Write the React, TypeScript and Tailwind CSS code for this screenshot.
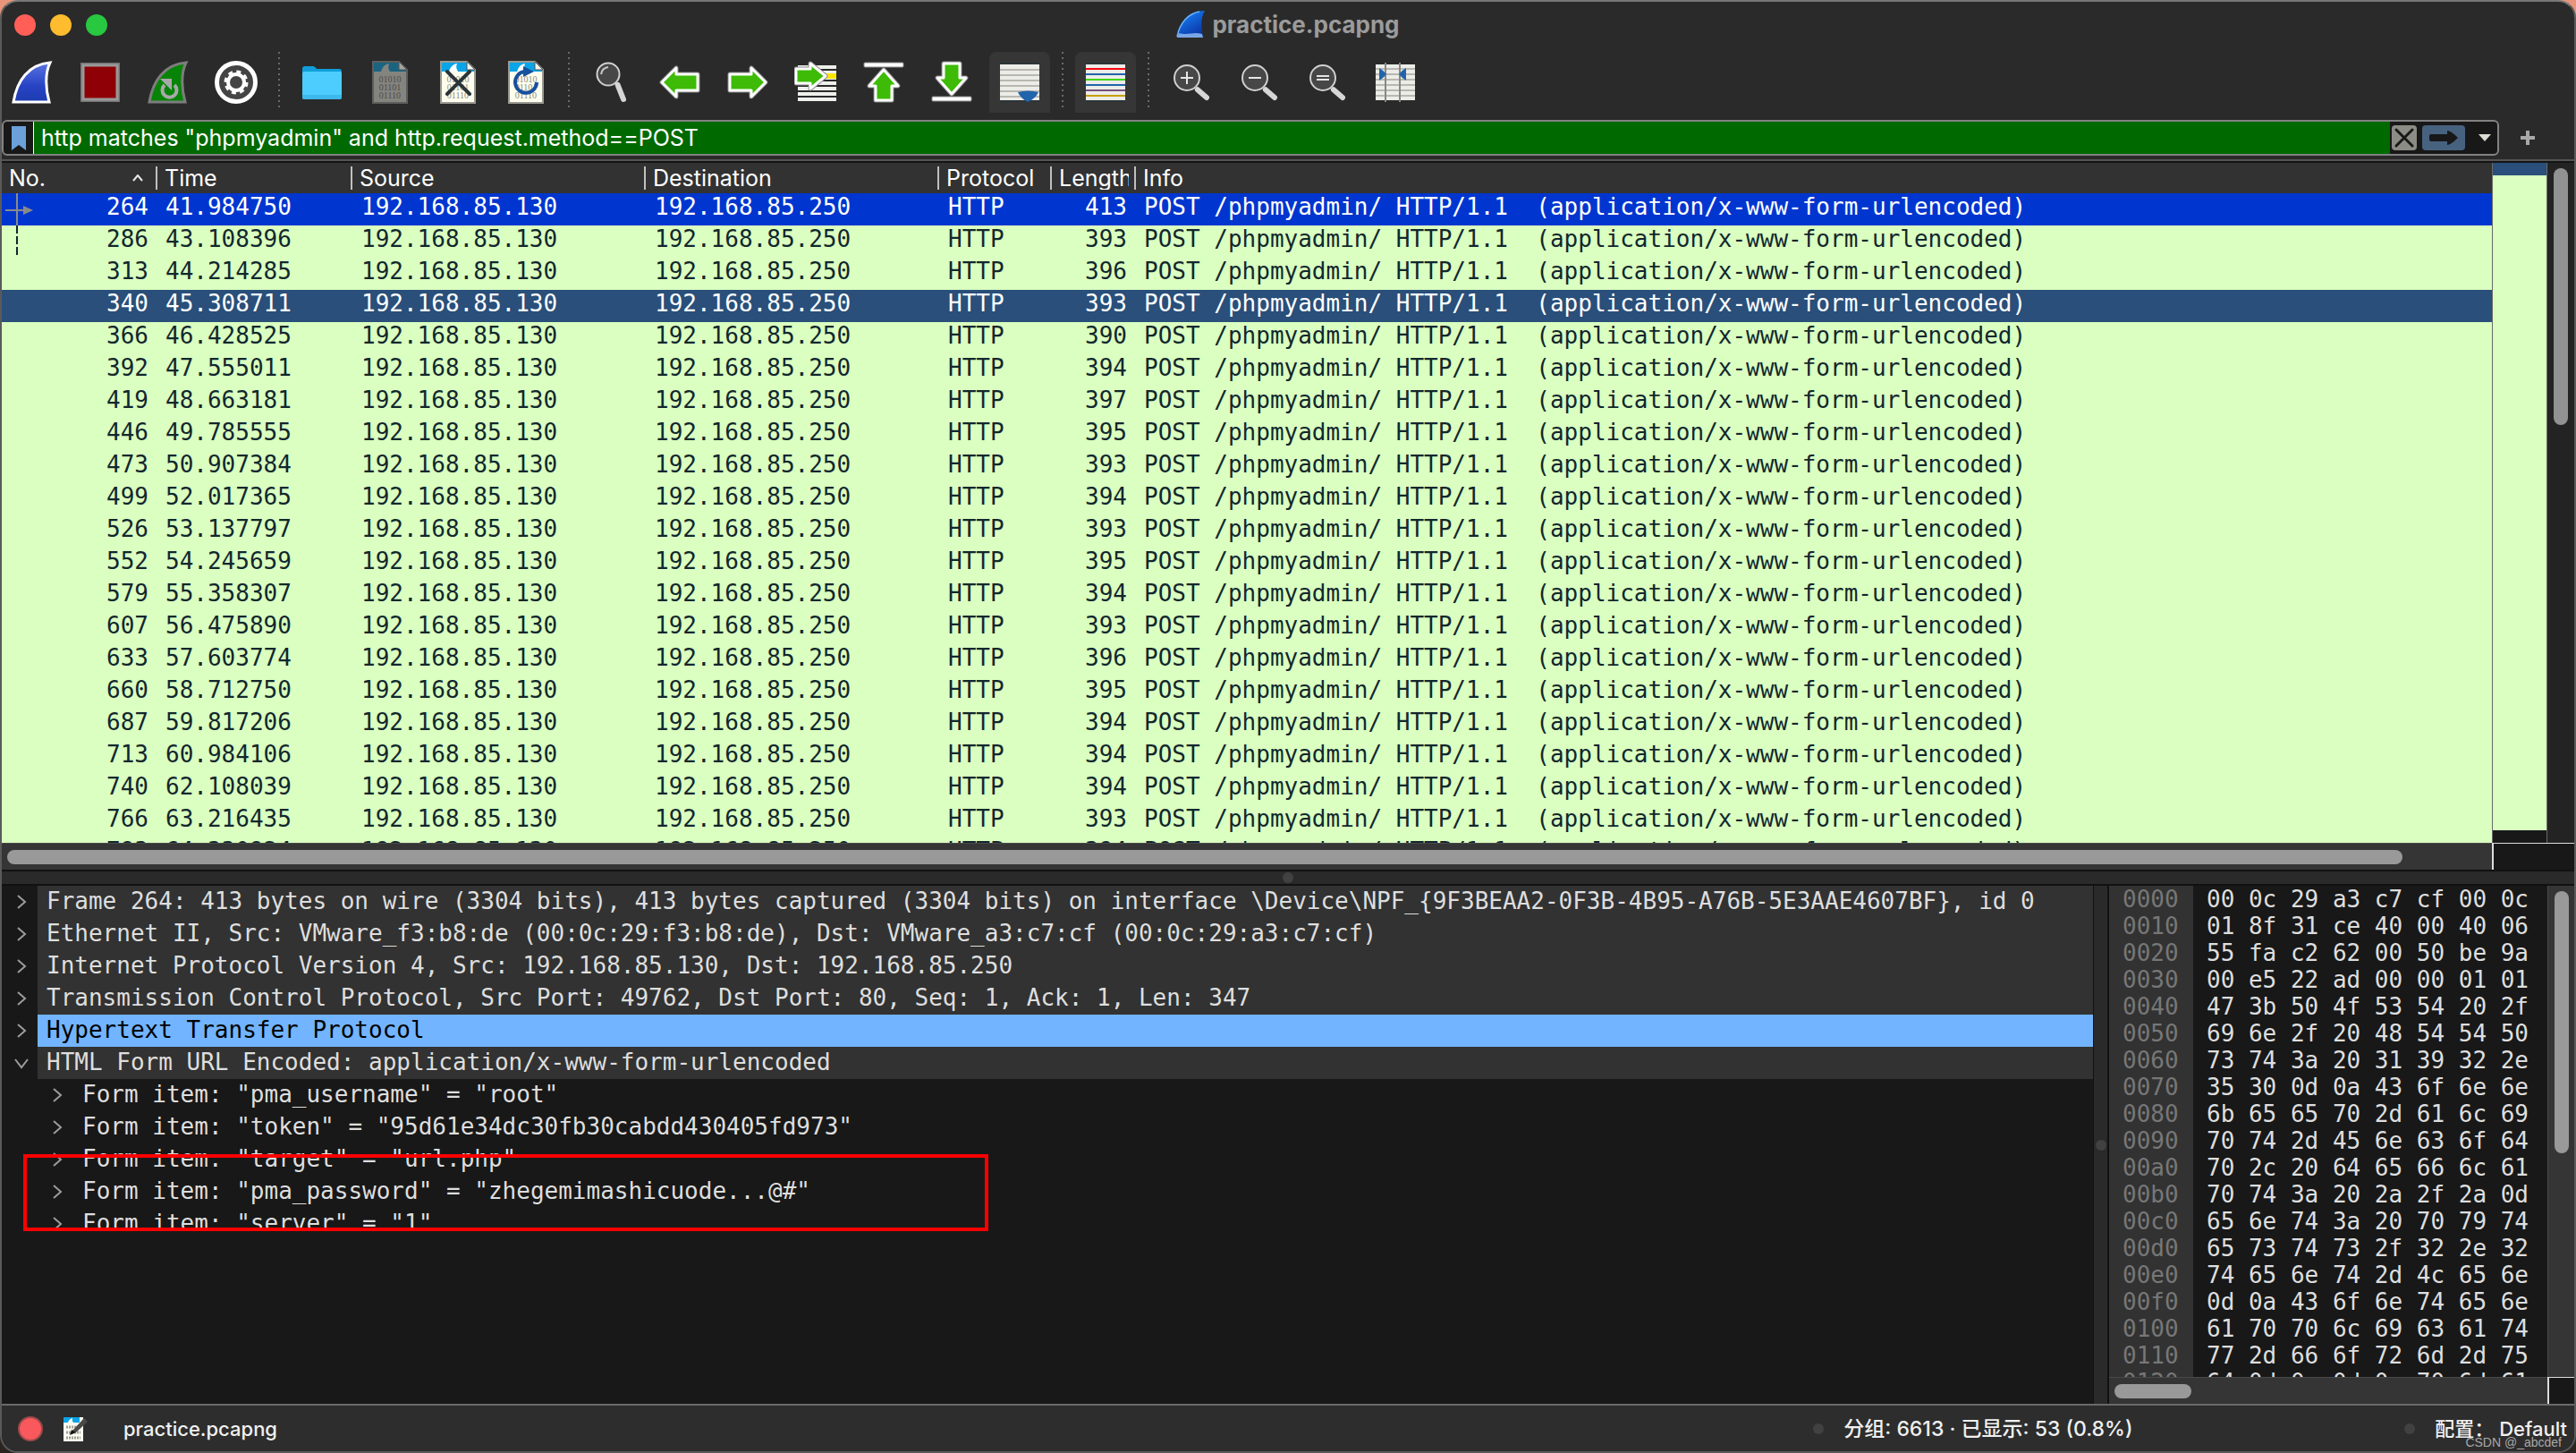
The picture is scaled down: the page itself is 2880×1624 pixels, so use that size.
import type { ReactNode } from "react"
import clsx from "clsx"

type Packet = { no: number, time: string, len: number }

const packets: Packet[] = [
    { no: 264, time: "41.984750", len: 413 },
    { no: 286, time: "43.108396", len: 393 },
    { no: 313, time: "44.214285", len: 396 },
    { no: 340, time: "45.308711", len: 393 },
    { no: 366, time: "46.428525", len: 390 },
    { no: 392, time: "47.555011", len: 394 },
    { no: 419, time: "48.663181", len: 397 },
    { no: 446, time: "49.785555", len: 395 },
    { no: 473, time: "50.907384", len: 393 },
    { no: 499, time: "52.017365", len: 394 },
    { no: 526, time: "53.137797", len: 393 },
    { no: 552, time: "54.245659", len: 395 },
    { no: 579, time: "55.358307", len: 394 },
    { no: 607, time: "56.475890", len: 393 },
    { no: 633, time: "57.603774", len: 396 },
    { no: 660, time: "58.712750", len: 395 },
    { no: 687, time: "59.817206", len: 394 },
    { no: 713, time: "60.984106", len: 394 },
    { no: 740, time: "62.108039", len: 394 },
    { no: 766, time: "63.216435", len: 393 },
    { no: 793, time: "64.330924", len: 394 },
]

const protocols = [
    "Frame 264: 413 bytes on wire (3304 bits), 413 bytes captured (3304 bits) on interface \\Device\\NPF_{9F3BEAA2-0F3B-4B95-A76B-5E3AAE4607BF}, id 0",
    "Ethernet II, Src: VMware_f3:b8:de (00:0c:29:f3:b8:de), Dst: VMware_a3:c7:cf (00:0c:29:a3:c7:cf)",
    "Internet Protocol Version 4, Src: 192.168.85.130, Dst: 192.168.85.250",
    "Transmission Control Protocol, Src Port: 49762, Dst Port: 80, Seq: 1, Ack: 1, Len: 347",
    "Hypertext Transfer Protocol",
    "HTML Form URL Encoded: application/x-www-form-urlencoded",
]

const formItems = [
    "Form item: \"pma_username\" = \"root\"",
    "Form item: \"token\" = \"95d61e34dc30fb30cabdd430405fd973\"",
    "Form item: \"target\" = \"url.php\"",
    "Form item: \"pma_password\" = \"zhegemimashicuode...@#\"",
    "Form item: \"server\" = \"1\"",
]

const bytes = [
    "00 0c 29 a3 c7 cf 00 0c",
    "01 8f 31 ce 40 00 40 06",
    "55 fa c2 62 00 50 be 9a",
    "00 e5 22 ad 00 00 01 01",
    "47 3b 50 4f 53 54 20 2f",
    "69 6e 2f 20 48 54 54 50",
    "73 74 3a 20 31 39 32 2e",
    "35 30 0d 0a 43 6f 6e 6e",
    "6b 65 65 70 2d 61 6c 69",
    "70 74 2d 45 6e 63 6f 64",
    "70 2c 20 64 65 66 6c 61",
    "70 74 3a 20 2a 2f 2a 0d",
    "65 6e 74 3a 20 70 79 74",
    "65 73 74 73 2f 32 2e 32",
    "74 65 6e 74 2d 4c 65 6e",
    "0d 0a 43 6f 6e 74 65 6e",
    "61 70 70 6c 69 63 61 74",
    "77 2d 66 6f 72 6d 2d 75",
    "64 0d 0a 0d 0a 70 6d 61",
]

export default function App() {
    return (
        <div className="h-screen w-full bg-linear-to-b from-[#e8957c] to-[#2a2420]">
            <div className="flex h-full flex-col overflow-hidden rounded-[20px] border-2 border-[#5a5a5a] border-t-[#777777] bg-[#2a2a2a] font-[Inter,'Noto_Sans_CJK_SC',sans-serif] text-[25px] text-white">
                <TitleBar />
                <Toolbar />
                <FilterBar />
                <PacketList />
                <div className="flex h-[18px] items-center justify-center border-y-2 border-[#111111]">
                    <Grip />
                </div>
                <div className="flex min-h-0 flex-[579]">
                    <PacketDetails />
                    <div className="flex w-[15px] items-center justify-center">
                        <Grip />
                    </div>
                    <PacketBytes />
                </div>
                <StatusBar />
            </div>
        </div>
    )
}

function Grip() {
    return <span className="size-3 shrink-0 rounded-full bg-[#414141]"></span>
}

function TitleBar() {
    return (
        <header className="relative flex h-[54px] items-center justify-center gap-2 pb-1">
            <div className="absolute top-[14px] left-[14px] flex gap-4">
                <button aria-label="Close" className="size-6 rounded-full bg-[#ff5f57]"></button>
                <button aria-label="Minimize" className="size-6 rounded-full bg-[#febc2e]"></button>
                <button aria-label="Zoom" className="size-6 rounded-full bg-[#28c840]"></button>
            </div>
            <svg viewBox="0 0 32 32" className="size-8">
                <defs>
                    <linearGradient id="logo" x1="0" y1="0" x2="0.6" y2="1">
                        <stop offset="0" stopColor="#1a8cff" />
                        <stop offset="1" stopColor="#0a35a8" />
                    </linearGradient>
                </defs>
                <path d="M1 31C3 14 14 1 32 1C27 9 28 19 30 31Z" fill="url(#logo)" />
                <path d="M1 30C4 14 14 4 26 2" fill="none" stroke="#6cb4ff" strokeWidth="1.5" />
                <path d="M1 31C2 28 2 28 3 26C12 29 20 24 29 27L30 31Z" fill="#7ba6e6" />
            </svg>
            <h1 className="text-[26px] font-bold text-[#9b9b9b]">practice.pcapng</h1>
        </header>
    )
}

/* toolbar */

function ToolButton({ label, active, children }: { label: string, active?: boolean, children: ReactNode }) {
    return (
        <button aria-label={label} className={clsx("flex size-[68px] items-center justify-center", active && "rounded-t-lg bg-[#363636]")}>
            <svg viewBox="0 0 48 48" className="size-12">
                {children}
            </svg>
        </button>
    )
}

function Separator() {
    return (
        <div className="flex w-3 justify-center">
            <svg viewBox="0 0 2 62" className="h-[62px] w-[2px]">
                <path d="M1 0V62" stroke="#6a6a6a" strokeWidth="2" strokeDasharray="2 4" />
            </svg>
        </div>
    )
}

function Toolbar() {
    return (
        <nav className="flex h-[78px] items-start gap-2 pt-[2px]">
            <ToolButton label="Start capture">
                <path d="M3 46C7 22 20 4 44 2C38 14 39 32 43 46Z" fill="url(#blueFin)" stroke="#ffffff" strokeWidth="3" />
                <defs>
                    <linearGradient id="blueFin" x1="0" y1="0" x2="0" y2="1">
                        <stop offset="0" stopColor="#5a74e0" />
                        <stop offset="0.6" stopColor="#2743c4" />
                        <stop offset="1" stopColor="#1e3cb0" />
                    </linearGradient>
                </defs>
            </ToolButton>
            <ToolButton label="Stop capture">
                <rect x="4" y="4" width="40" height="40" fill="#8f0006" stroke="#757575" strokeWidth="4" />
                <rect x="5" y="5" width="38" height="38" fill="none" stroke="#999999" strokeWidth="3" />
            </ToolButton>
            <ToolButton label="Restart capture">
                <path d="M3 46C7 22 20 4 44 2C38 14 39 32 43 46Z" fill="#078407" stroke="#7d7d7d" strokeWidth="3" />
                <path d="M20 27A8 8 0 1 0 31 27" fill="none" stroke="#a8a8a8" strokeWidth="4" />
                <path d="M15 20L28 20L28 33Z" fill="#a8a8a8" />
            </ToolButton>
            <ToolButton label="Capture options">
                <circle cx="24" cy="24" r="21.5" fill="#444444" stroke="#ffffff" strokeWidth="5" />
                <circle cx="24" cy="24" r="11.5" fill="none" stroke="#ffffff" strokeWidth="4" strokeDasharray="4.8 4.232" />
                <circle cx="24" cy="24" r="9" fill="none" stroke="#ffffff" strokeWidth="4" />
            </ToolButton>
            <Separator />
            <ToolButton label="Open">
                <path d="M2 9Q2 6 5 6H14Q16 6 18 9H43Q46 9 46 12V20H2Z" fill="#109fdb" />
                <rect x="2" y="12" width="44" height="31" rx="2" fill="#4dcdfd" />
                <path d="M2 38H46V40Q46 43 43 43H5Q2 43 2 40Z" fill="#3db8ec" />
            </ToolButton>
            <ToolButton label="Save">
                <CaptureFile dim />
            </ToolButton>
            <ToolButton label="Close file">
                <CaptureFile />
                <path d="M12 12L37 37M37 12L12 37" stroke="#2b3538" strokeWidth="4" strokeLinecap="round" />
            </ToolButton>
            <ToolButton label="Reload">
                <CaptureFile />
                <path d="M36 24A12 12 0 1 1 22 12" fill="none" stroke="#17509c" strokeWidth="4" />
                <path d="M21 6L33 12L21 18Z" fill="#17509c" />
            </ToolButton>
            <Separator />
            <ToolButton label="Find">
                <Lens cx={20} cy={15} r={12.5} hx={37} hy={43} />
                <path d="M12 15Q13 8 20 7" fill="none" stroke="#c8c8c8" strokeWidth="2" />
            </ToolButton>
            <ToolButton label="Back">
                <Arrow d="M4 24L20 8V15H44V33H20V40Z" />
            </ToolButton>
            <ToolButton label="Forward">
                <Arrow d="M44 24L28 8V15H4V33H28V40Z" />
            </ToolButton>
            <ToolButton label="Go to packet">
                <path d="M4 7H47M4 13H47M4 19H47M4 25H47M4 31H47M4 37H47M4 43H47" stroke="#efefec" strokeWidth="4" />
                <rect x="34" y="14" width="13" height="6" fill="#ffe600" />
                <Arrow d="M2 9H18V3L35 17L18 31V25H2Z" />
            </ToolButton>
            <ToolButton label="First packet">
                <rect x="2" y="2" width="44" height="5" rx="1" fill="#ffffff" stroke="#8a8a8a" />
                <Arrow d="M24 10L40 28H33V44H15V28H8Z" />
            </ToolButton>
            <ToolButton label="Last packet">
                <rect x="2" y="40" width="44" height="5" rx="1" fill="#ffffff" stroke="#8a8a8a" />
                <Arrow d="M24 37L40 19H33V3H15V19H8Z" />
            </ToolButton>
            <ToolButton label="Auto scroll" active>
                <rect x="2" y="3" width="44" height="42" fill="#ecece9" />
                <path d="M2 10H46M2 16H46M2 22H46M2 28H46M2 34H46M2 40H46" stroke="#b8b8b0" strokeWidth="2" />
                <path d="M2 3H46M2 45H46" stroke="#2b3538" strokeWidth="2" />
                <path d="M22 35Q33 32 45 35Q42 42 33 46Q25 42 22 35Z" fill="#2264ac" />
            </ToolButton>
            <Separator />
            <ToolButton label="Colorize" active>
                <rect x="2" y="3" width="44" height="42" fill="#ecece9" />
                <path d="M2 3H46M2 45H46" stroke="#2b3538" strokeWidth="2" />
                <path d="M2 9H46" stroke="#f80610" strokeWidth="2" />
                <path d="M2 15H46M2 27H46" stroke="#2264ac" strokeWidth="2" />
                <path d="M2 21H46" stroke="#43d612" strokeWidth="2" />
                <path d="M2 33H46" stroke="#75507b" strokeWidth="2" />
                <path d="M2 39H46" stroke="#c4a000" strokeWidth="2" />
            </ToolButton>
            <Separator />
            <ToolButton label="Zoom in">
                <Lens cx={19} cy={19} r={14} hx={41} hy={41} />
                <path d="M12 19H26M19 12V26" stroke="#e6e6e6" strokeWidth="2" />
            </ToolButton>
            <ToolButton label="Zoom out">
                <Lens cx={19} cy={19} r={14} hx={41} hy={41} />
                <path d="M12 19H26" stroke="#e6e6e6" strokeWidth="2" />
            </ToolButton>
            <ToolButton label="Normal size">
                <Lens cx={19} cy={19} r={14} hx={41} hy={41} />
                <path d="M12 17H26M12 21H26" stroke="#e6e6e6" strokeWidth="2" />
            </ToolButton>
            <ToolButton label="Resize columns">
                <rect x="2" y="4" width="44" height="40" fill="#ecece9" />
                <path d="M2 9H46M2 15H46M2 21H46M2 27H46M2 33H46M2 39H46" stroke="#b8b8b0" strokeWidth="2" />
                <path d="M13 2V46M29 2V46" stroke="#888880" strokeWidth="2" />
                <path d="M6 8Q10 10 14 15Q10 20 6 22ZM36 8Q32 10 28 15Q32 20 36 22Z" fill="#2264ac" />
            </ToolButton>
        </nav>
    )
}

function Arrow({ d }: { d: string }) {
    return (
        <>
            <path d={d} fill="none" stroke="#8a8a8a" strokeWidth="5" strokeLinejoin="round" />
            <path d={d} fill="#3dbb06" stroke="#ffffff" strokeWidth="3" strokeLinejoin="round" />
        </>
    )
}

function Lens({ cx, cy, r, hx, hy }: { cx: number, cy: number, r: number, hx: number, hy: number }) {
    return (
        <>
            <path d={`M${(cx + r * 0.85)} ${(cy + r * 0.95)}L${hx} ${hy}`} stroke="#d6d6d6" strokeWidth="6" strokeLinecap="round" />
            <circle cx={cx} cy={cy} r={r} fill="#474747" stroke="#d0d0d0" strokeWidth="2" />
        </>
    )
}

function CaptureFile({ dim }: { dim?: boolean }) {
    return (
        <>
            <path d="M5 1H34L43 10V47H5Z" fill={dim ? "#84847f" : "#fdfdee"} stroke={dim ? "#5e5e5e" : "#9a9a92"} strokeWidth="2" />
            <path d="M6 2H34V10H42V12H6Z" fill={dim ? "#1a6480" : "#0aa4e8"} />
            <path d="M14 12Q16 4 23 3Q21 8 24 12Z" fill={dim ? "#84847f" : "#ffffff"} />
            <path d="M34 1L43 10H34Z" fill={dim ? "#a4a4a0" : "#f4f4f0"} stroke="#555555" strokeWidth="1" />
            <g fill={dim ? "#4c4c4a" : "#8c8c84"} className="font-['Liberation_Serif',serif] text-[10px]" textAnchor="middle">
                <text x="24" y="24">01010</text>
                <text x="24" y="33">01101</text>
                <text x="24" y="42">01110</text>
            </g>
        </>
    )
}

/* display filter */

function FilterBar() {
    return (
        <form className="flex items-center pb-1" onSubmit={e => e.preventDefault()}>
            <div className="flex h-10 flex-1 items-center overflow-hidden rounded-md border-2 border-[#828282] bg-[#181818]">
                <button type="button" aria-label="Filter bookmarks" className="flex h-full w-[34px] items-center justify-center border-r border-white">
                    <svg viewBox="0 0 16 28" className="h-7 w-4">
                        <path d="M0 1H16V28L8 22L0 28Z" fill="#6ba0d8" />
                    </svg>
                </button>
                <input aria-label="Display filter" defaultValue={"http matches \"phpmyadmin\" and http.request.method==POST"} className="h-full min-w-0 flex-1 bg-[#006a00] px-2 outline-none" />
                <button type="button" aria-label="Clear filter" className="ml-[2px] size-7 rounded-sm bg-[#8c8c86]">
                    <svg viewBox="0 0 28 28" className="size-7">
                        <path d="M5 5L23 23M23 5L5 23" stroke="#181818" strokeWidth="3" strokeLinecap="round" />
                    </svg>
                </button>
                <button type="submit" aria-label="Apply filter" className="ml-[6px] h-7 w-12 rounded-sm bg-[#47627f]">
                    <svg viewBox="0 0 48 28" className="h-7 w-12">
                        <path d="M10 10H28V6Q32 6 40 14Q32 22 28 22V18H10Q8 18 8 16V12Q8 10 10 10Z" fill="#181818" />
                    </svg>
                </button>
                <button type="button" aria-label="Filter history" className="flex h-full w-9 items-center justify-center pl-2">
                    <svg viewBox="0 0 14 8" className="h-2 w-[14px]">
                        <path d="M0 0H14L7 8Z" fill="#dcdcd4" />
                    </svg>
                </button>
            </div>
            <button type="button" aria-label="Add filter button" className="flex w-[84px] justify-start pl-6">
                <svg viewBox="0 0 16 16" className="size-4">
                    <path d="M0 8H16M8 0V16" stroke="#a8a8a8" strokeWidth="4" />
                </svg>
            </button>
        </form>
    )
}

/* packet list */

const headers = ["Time", "Source", "Destination", "Protocol", "Length", "Info"]

function PacketList() {
    return (
        <section className="flex min-h-0 flex-[792] flex-col border-t-2 border-[#555555]">
            <div className="flex min-h-0 flex-1 border-t-2 border-[#141414]">
                <div className="relative min-w-0 flex-1 overflow-hidden bg-[#daffc0]">
                    <table className="w-full table-fixed border-collapse">
                        <colgroup>
                            <col className="w-[174px]" />
                            <col className="w-[218px]" />
                            <col className="w-[328px]" />
                            <col className="w-[328px]" />
                            <col className="w-[126px]" />
                            <col className="w-[94px]" />
                            <col />
                        </colgroup>
                        <thead className="bg-[#323232] text-left leading-[26px]">
                            <tr className="h-[34px]">
                                <th className="p-0 font-normal">
                                    <div className="flex items-center justify-between border-r-2 border-[#c0c0c0] pr-[14px] pl-2">
                                        No.
                                        <svg viewBox="0 0 12 8" className="h-2 w-3">
                                            <path d="M1 7L6 1L11 7" fill="none" stroke="#e8e8e8" strokeWidth="2" />
                                        </svg>
                                    </div>
                                </th>
                                {headers.map(h => (
                                    <th key={h} className="p-0 font-normal">
                                        <div className={clsx("pl-2", h !== "Info" && "border-r-2 border-[#c0c0c0] pr-[6px]")}>
                                            <p className={clsx("whitespace-nowrap", h === "Length" && "overflow-hidden")}>{h}</p>
                                        </div>
                                    </th>
                                ))}
                            </tr>
                        </thead>
                        <tbody className="font-['DejaVu_Sans_Mono',monospace] text-[26px] leading-[30px] whitespace-pre">
                            {packets.map((p, i) => (
                                <tr key={p.no} className={clsx("h-9 align-top", i === 0 ? "bg-[#0036cf] text-white" : i === 3 ? "bg-[#294f7a] text-white" : "text-[#12272e]")}>
                                    <td className="p-0 pr-[10px] text-right">{p.no}</td>
                                    <td className="p-0 pl-[9px]">{p.time}</td>
                                    <td className="p-0 pl-[10px]">192.168.85.130</td>
                                    <td className="p-0 pl-[10px]">192.168.85.250</td>
                                    <td className="p-0 pl-[10px]">HTTP</td>
                                    <td className="p-0 pr-[10px] text-right">{p.len}</td>
                                    <td className="p-0 pl-[9px]">POST /phpmyadmin/ HTTP/1.1  (application/x-www-form-urlencoded)</td>
                                </tr>
                            ))}
                        </tbody>
                    </table>
                    {/* conversation marker, drawn over the No. column */}
                    <svg viewBox="0 0 36 72" className="absolute top-[34px] left-0 h-[72px] w-9">
                        <path d="M17 0V36M4 19H26" stroke="#8a8a8a" strokeWidth="2" />
                        <path d="M24 14L35 19L24 24Z" fill="#8a8a8a" />
                        <path d="M17 36V70" stroke="#12272e" strokeWidth="2" strokeDasharray="9 3" />
                    </svg>
                </div>
                <div className="flex w-[62px] flex-col border-x border-[#6a6a6a] bg-[#181818] pb-[14px]">
                    <div className="h-[14px] bg-[#294f7a]"></div>
                    <div className="flex-1 bg-[#daffc0]"></div>
                </div>
                <div className="w-[30px] bg-[#232323] px-[7px] pt-[6px]">
                    <div className="h-[38%] w-4 rounded-full bg-[#929292]"></div>
                </div>
            </div>
            <div className="flex h-[30px] shrink-0">
                <div className="flex-1 border-t border-[#4a4a4a] bg-[#353535] pt-[7px] pl-[6px]">
                    <div className="h-4 w-[96.4%] rounded-full bg-[#999999]"></div>
                </div>
                <div className="w-[92px] border-t border-l-2 border-[#dddddd] bg-[#181818]"></div>
            </div>
        </section>
    )
}

/* packet details */

function Chevron({ open }: { open?: boolean }) {
    return (
        <svg viewBox="0 0 16 18" className="h-[18px] w-4">
            <path d={open ? "M1 5L8 14L15 5" : "M4 2L12 9L4 16"} fill="none" stroke="#9c9c9c" strokeWidth="2" />
        </svg>
    )
}

function PacketDetails() {
    return (
        <section className="relative min-w-0 flex-1 overflow-hidden border-r border-[#111111] bg-[#181818] font-['DejaVu_Sans_Mono',monospace] text-[26px] leading-[34px] whitespace-pre text-[#dedede]">
            <ul>
                {protocols.map((p, i) => (
                    <li key={p} className="flex h-9">
                        <button aria-label="Toggle" className="flex w-10 items-center pl-[14px]">
                            <Chevron open={i === 5} />
                        </button>
                        <span className={clsx("flex-1 pl-[10px]", i === 4 ? "bg-[#72b4ff] text-black" : "bg-[#323232]")}>{p}</span>
                    </li>
                ))}
                {formItems.map(f => (
                    <li key={f} className="flex h-9 pl-[40px]">
                        <button aria-label="Toggle" className="flex w-10 items-center pl-[14px]">
                            <Chevron />
                        </button>
                        <span className="pl-[10px]">{f}</span>
                    </li>
                ))}
            </ul>
            {/* highlight frame around the password item */}
            <div className="absolute top-[300px] left-6 h-[86px] w-[1079px] border-4 border-[#ff0000]"></div>
        </section>
    )
}

/* packet bytes */

function PacketBytes() {
    return (
        <section className="flex w-[522px] flex-col border-l-2 border-[#111111]">
            <div className="flex min-h-0 flex-1">
                <div className="flex min-w-0 flex-1 overflow-hidden bg-[#181818] font-['DejaVu_Sans_Mono',monospace] text-[26px] leading-[30px] whitespace-pre">
                    <div className="w-[94px] bg-[#323232] pl-[15px] text-[#777777]">
                        {bytes.map((_, i) => (
                            <p key={i}>{(i * 16).toString(16).padStart(4, "0")}</p>
                        ))}
                    </div>
                    <div className="pl-[15px] text-[#dedede]">
                        {bytes.map((b, i) => (
                            <p key={i}>{b}</p>
                        ))}
                    </div>
                </div>
                <div className="w-[30px] border-l border-[#4a4a4a] bg-[#353535] px-[7px] pt-[6px]">
                    <div className="h-[54%] w-4 rounded-full bg-[#999999]"></div>
                </div>
            </div>
            <div className="flex h-[30px]">
                <div className="flex-1 border-t border-[#4a4a4a] bg-[#353535] pt-[7px] pl-[6px]">
                    <div className="h-4 w-[86px] rounded-full bg-[#999999]"></div>
                </div>
                <div className="w-[30px] border-t border-l-2 border-[#dddddd] bg-[#181818]"></div>
            </div>
        </section>
    )
}

function StatusBar() {
    return (
        <footer className="relative flex h-[53px] items-center border-t-2 border-[#6a6a6a] bg-[#2d2d2d] text-[22px] font-medium text-[#f0f0f0]">
            <button aria-label="Expert information" className="ml-[18px] size-7 rounded-full border-2 border-[#9a4a4c] bg-[#f9585c]"></button>
            <button aria-label="Capture file properties" className="ml-5">
                <svg viewBox="0 0 34 32" className="h-8 w-[34px]">
                    <rect x="3" y="3" width="22" height="27" fill="#fbfbf0" />
                    <path d="M3 3H21V9H3Z" fill="#0aa4e8" />
                    <path d="M8 9Q9 5 13 4Q12 7 14 9Z" fill="#ffffff" />
                    <path d="M6 14H22M6 20H22M6 26H22" stroke="#a0a098" strokeWidth="3" strokeDasharray="2 1" />
                    <path d="M13 18L26 4L30 8L17 20Z" fill="#4a4a4a" />
                    <path d="M10 23L12 17L17 20Z" fill="#111111" />
                </svg>
            </button>
            <span className="ml-9 flex-1 pt-[2px]">practice.pcapng</span>
            <Grip />
            <span className="ml-[22px] w-[627px] pt-[2px] text-[23px]">分组: 6613 · 已显示: 53 (0.8%)</span>
            <div className="flex items-center gap-[22px] pr-2">
                <Grip />
                <button className="pt-[2px]">配置： Default</button>
            </div>
            <span className="absolute right-[14px] bottom-0 font-['Liberation_Sans',sans-serif] text-sm font-normal text-[#a8a8a8]">CSDN @_abcdef</span>
        </footer>
    )
}
